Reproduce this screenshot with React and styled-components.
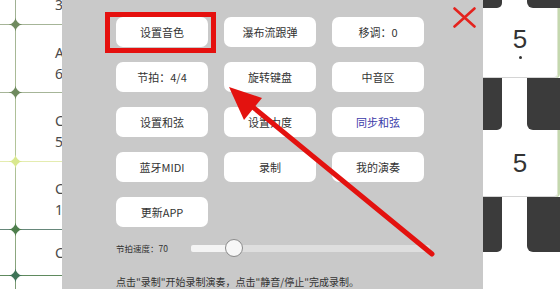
import React from "react";
import styled, { createGlobalStyle } from "styled-components";

const Global = createGlobalStyle`
  html, body { margin: 0; padding: 0; width: 560px; height: 289px; overflow: hidden; background: #fff; }
  body { font-family: "Noto Sans CJK SC", "Noto Sans", sans-serif; }
  #root { width: 560px; height: 289px; }
`;

const Screen = styled.div`
  position: relative;
  display: flex;
  width: 560px;
  height: 289px;
  overflow: hidden;
  background: #fff;
`;

/* ---------- left grid (background app) ---------- */
const LeftStrip = styled.div`
  position: relative;
  flex: none;
  width: 62px;
  height: 289px;
  display: flex;
  flex-direction: column;
  overflow: hidden;
  background: #fff;
  &::before {
    content: "";
    position: absolute;
    left: 15px;
    top: 0;
    bottom: 0;
    width: 1px;
    background: linear-gradient(#9fb093, #b4c69a 55%, #7c9a74);
  }
`;

const GridRow = styled.div`
  position: relative;
  flex: none;
  box-sizing: border-box;
  height: ${(p) => p.$h}px;
  border-bottom: 1px solid ${(p) => p.$line};
  padding: ${(p) => p.$pt}px 0 0 55px;
  font-family: "Noto Sans", sans-serif;
  font-size: 14px;
  line-height: 21px;
  color: #4a4a4a;
  white-space: nowrap;
`;

const NoteLine = styled.div`
  height: 21px;
`;

const Sparkle = styled.svg`
  position: absolute;
  left: 8px;
  bottom: -8px;
  width: 15px;
  height: 15px;
  z-index: 2;
`;

const Star = ({ color }) => (
  <Sparkle viewBox="-10 -10 20 20">
    <circle r="4.5" fill={color} opacity="0.3" />
    <path d="M0,-9 Q1.3,-1.3 9,0 Q1.3,1.3 0,9 Q-1.3,1.3 -9,0 Q-1.3,-1.3 0,-9Z" fill={color} />
  </Sparkle>
);

/* ---------- settings panel ---------- */
const Panel = styled.div`
  position: relative;
  flex: none;
  box-sizing: border-box;
  width: 421px;
  height: 297px;
  margin-top: -8px;
  padding: 25px 0 0 54px;
  background: #c9c9c9;
  border-top-right-radius: 10px;
`;

const ButtonGrid = styled.div`
  display: grid;
  grid-template-columns: repeat(3, 92px);
  grid-auto-rows: 30px;
  column-gap: 16px;
  row-gap: 15px;
`;

const PanelButton = styled.button`
  border: none;
  border-radius: 7px;
  background: #fff;
  padding: 0;
  font-family: "Noto Sans CJK SC", "Noto Sans", sans-serif;
  font-size: 11px;
  color: ${(p) => (p.$accent ? "#3a3aa8" : "#333")};
  cursor: pointer;
`;

const SliderRow = styled.div`
  display: flex;
  align-items: center;
  height: 20px;
  margin-top: 11px;
`;

const SliderLabel = styled.span`
  width: 75px;
  font-size: 8.5px;
  color: #333;
`;

const Track = styled.div`
  position: relative;
  width: 239px;
  height: 7px;
  border-radius: 2px;
  background: linear-gradient(to right, #f4f4f4 0 43px, #dedede 43px);
`;

const Thumb = styled.div`
  position: absolute;
  top: 50%;
  left: 34px;
  width: 18px;
  height: 18px;
  margin-top: -9px;
  box-sizing: border-box;
  border-radius: 50%;
  border: 1px solid #8a8a8a;
  background: #f7f7f7;
`;

const Hint = styled.p`
  margin: 17px 0 0;
  font-size: 10px;
  line-height: 14px;
  color: #333;
  white-space: nowrap;
`;

const Close = styled.svg`
  position: absolute;
  left: 391px;
  top: 15px;
  width: 23px;
  height: 21px;
`;

const Highlight = styled.div`
  position: absolute;
  left: 43px;
  top: 20px;
  width: 111px;
  height: 41px;
  box-sizing: border-box;
  border: 5px solid #e5100e;
  pointer-events: none;
`;

/* ---------- right keys ---------- */
const Keys = styled.div`
  flex: 1;
  display: flex;
  flex-direction: column;
  background: #fff;
`;

const BlackRow = styled.div`
  flex: none;
  height: ${(p) => p.$h}px;
  display: flex;
  justify-content: space-between;
`;

const BlackKey = styled.div`
  width: ${(p) => p.$w}px;
  background: #3b3b3b;
  border-radius: ${(p) => (p.$side === "left" ? "0 0 5px 0" : "0 0 0 6px")};
`;

const WhiteKey = styled.div`
  flex: none;
  box-sizing: border-box;
  height: ${(p) => p.$h}px;
  width: 75px;
  display: flex;
  flex-direction: column;
  align-items: center;
  justify-content: center;
  border-bottom: 1px solid #d4d4d4;
  border-right: 1px solid #dfe6d2;
  box-shadow: 2px 0 0 #c4d8ae;
  border-radius: 0 0 4px 0;
  font-family: "Liberation Sans", sans-serif;
  font-size: 26px;
  line-height: 26px;
  color: #333;
`;

const Dot = styled.span`
  width: 3px;
  height: 3px;
  margin-top: 4px;
  border-radius: 50%;
  background: #333;
`;

const Arrow = styled.svg`
  position: absolute;
  left: 0;
  top: 0;
  width: 560px;
  height: 289px;
  pointer-events: none;
  z-index: 10;
`;

const rows = [
  { h: 25, line: "#a6b598", pt: 0, notes: [], top: "3" },
  { h: 68, line: "#a6b598", pt: 17, notes: ["A", "6"], star: "#6f8a5e" },
  { h: 69, line: "#e4ecb0", pt: 17, notes: ["C", "5"], star: "#6f8a5e" },
  { h: 68, line: "#66877a", pt: 16, notes: ["C", "1"], star: "#d9e88e" },
  { h: 46, line: "#5f8a5e", pt: 12, notes: ["C"], star: "#4e7e4c" },
  { h: 13, line: "transparent", pt: 0, notes: [], star: "#3f7458" },
];

const buttons = [
  "设置音色", "瀑布流跟弹", "移调：0",
  "节拍：4/4", "旋转键盘", "中音区",
  "设置和弦", "设置力度", "同步和弦",
  "蓝牙MIDI", "录制", "我的演奏",
  "更新APP",
];

export default function App() {
  return (
    <Screen>
      <Global />
      <LeftStrip>
        {rows.map((r, i) => (
          <GridRow key={i} $h={r.h} $line={r.line} $pt={r.pt}>
            {r.top && <NoteLine style={{ marginTop: -6 }}>{r.top}</NoteLine>}
            {r.notes.map((n, j) => (
              <NoteLine key={j}>{n}</NoteLine>
            ))}
            {i < 5 && <Star color={rows[i + 1].star} />}
          </GridRow>
        ))}
      </LeftStrip>

      <Panel>
        <ButtonGrid>
          {buttons.map((b) => (
            <PanelButton key={b} $accent={b === "同步和弦"}>
              {b}
            </PanelButton>
          ))}
        </ButtonGrid>
        <SliderRow>
          <SliderLabel>节拍速度：70</SliderLabel>
          <Track>
            <Thumb />
          </Track>
        </SliderRow>
        <Hint>点击"录制"开始录制演奏，点击"静音/停止"完成录制。</Hint>
        <Close viewBox="0 0 23 21">
          <path d="M1.5 1.5 L21.5 19.5 M21.5 1.5 L1.5 19.5" stroke="#e4231e" strokeWidth="2.6" strokeLinecap="round" />
        </Close>
        <Highlight />
      </Panel>

      <Keys>
        <BlackRow $h={8}>
          <BlackKey $w={19} $side="left" />
          <BlackKey $w={33} $side="right" />
        </BlackRow>
        <WhiteKey $h={70}>
          5<Dot />
        </WhiteKey>
        <BlackRow $h={52}>
          <BlackKey $w={19} $side="left" />
          <BlackKey $w={33} $side="right" />
        </BlackRow>
        <WhiteKey $h={67}>5</WhiteKey>
        <BlackRow $h={55}>
          <BlackKey $w={19} $side="left" />
          <BlackKey $w={33} $side="right" />
        </BlackRow>
      </Keys>

      <Arrow viewBox="0 0 560 289">
        <line x1="432" y1="254" x2="248" y2="103" stroke="#e3120f" strokeWidth="5" strokeLinecap="round" />
        <polygon points="229,87 262,98 244,120" fill="#e3120f" />
      </Arrow>
    </Screen>
  );
}
